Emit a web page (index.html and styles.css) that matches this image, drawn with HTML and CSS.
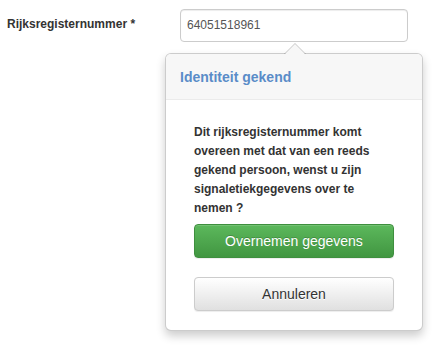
FILE: index.html
```html
<!DOCTYPE html>
<html>
<head>
<meta charset="utf-8">
<link rel="stylesheet" href="styles.css">
</head>
<body>
<div class="form-row">
  <label class="label">Rijksregisternummer *</label>
  <div class="input">64051518961</div>
</div>
<div class="popover">
  <div class="arrow"></div>
  <div class="popover-title">Identiteit gekend</div>
  <div class="popover-content">
    <p class="message">Dit rijksregisternummer komt overeen met dat van een reeds gekend persoon, wenst u zijn signaletiekgegevens over te nemen ?</p>
    <button class="btn btn-success">Overnemen gegevens</button>
    <button class="btn btn-default">Annuleren</button>
  </div>
</div>
</body>
</html>
```

FILE: styles.css
```css
html, body {
  margin: 0;
  padding: 0;
  background: #fff;
}
body {
  font-family: "Liberation Sans", Arial, sans-serif;
  color: #333;
  width: 432px;
  height: 352px;
  overflow: hidden;
}
.form-row {
  display: flex;
  align-items: center;
  padding: 9px 0 0 7px;
}
.label {
  width: 173px;
  font-size: 12px;
  font-weight: bold;
  color: #333;
  margin-top: -4px;
}
.input {
  box-sizing: border-box;
  width: 228px;
  height: 33px;
  border: 1px solid #ccc;
  border-radius: 4px;
  padding: 0 6px;
  font-size: 12px;
  line-height: 31px;
  color: #555;
  box-shadow: inset 0 1px 1px rgba(0,0,0,.075);
}
.popover {
  position: relative;
  box-sizing: border-box;
  width: 258px;
  margin: 11px 0 0 165px;
  border: 1px solid rgba(0,0,0,.2);
  border-radius: 6px;
  background: #fff;
  box-shadow: 0 5px 10px rgba(0,0,0,.2);
}
.arrow {
  position: absolute;
  left: 118px;
  top: -11px;
  width: 0;
  height: 0;
  border-left: 11px solid transparent;
  border-right: 11px solid transparent;
  border-bottom: 11px solid rgba(0,0,0,.22);
}
.arrow::after {
  content: "";
  position: absolute;
  left: -10px;
  top: 1px;
  border-left: 10px solid transparent;
  border-right: 10px solid transparent;
  border-bottom: 10px solid #f7f7f7;
}
.popover-title {
  height: 46px;
  box-sizing: border-box;
  padding: 13px 14px;
  font-size: 14px;
  line-height: 20px;
  font-weight: bold;
  color: #5a8cc8;
  background: #f7f7f7;
  border-bottom: 1px solid #ebebeb;
  border-radius: 5px 5px 0 0;
}
.popover-content {
  padding: 23px 28px 19px;
  display: flex;
  flex-direction: column;
}
.message {
  margin: 0 0 6px;
  font-size: 12px;
  line-height: 19px;
  font-weight: bold;
  color: #333;
}
.btn {
  box-sizing: border-box;
  height: 34px;
  width: 100%;
  font-family: "Liberation Sans", Arial, sans-serif;
  font-size: 14px;
  border-radius: 4px;
  border: 1px solid transparent;
  padding: 0;
  cursor: pointer;
}
.btn-success {
  color: #fff;
  background-image: linear-gradient(to bottom, #5cb85c 0, #419641 100%);
  border-color: #3e8f3e;
  text-shadow: 0 -1px 0 rgba(0,0,0,.2);
  box-shadow: inset 0 1px 0 rgba(255,255,255,.15), 0 1px 1px rgba(0,0,0,.075);
}
.btn-default {
  margin-top: 19px;
  color: #333;
  background-image: linear-gradient(to bottom, #fff 0, #e0e0e0 100%);
  border-color: #ccc;
  text-shadow: 0 1px 0 #fff;
  box-shadow: inset 0 1px 0 rgba(255,255,255,.15), 0 1px 1px rgba(0,0,0,.075);
}
```
